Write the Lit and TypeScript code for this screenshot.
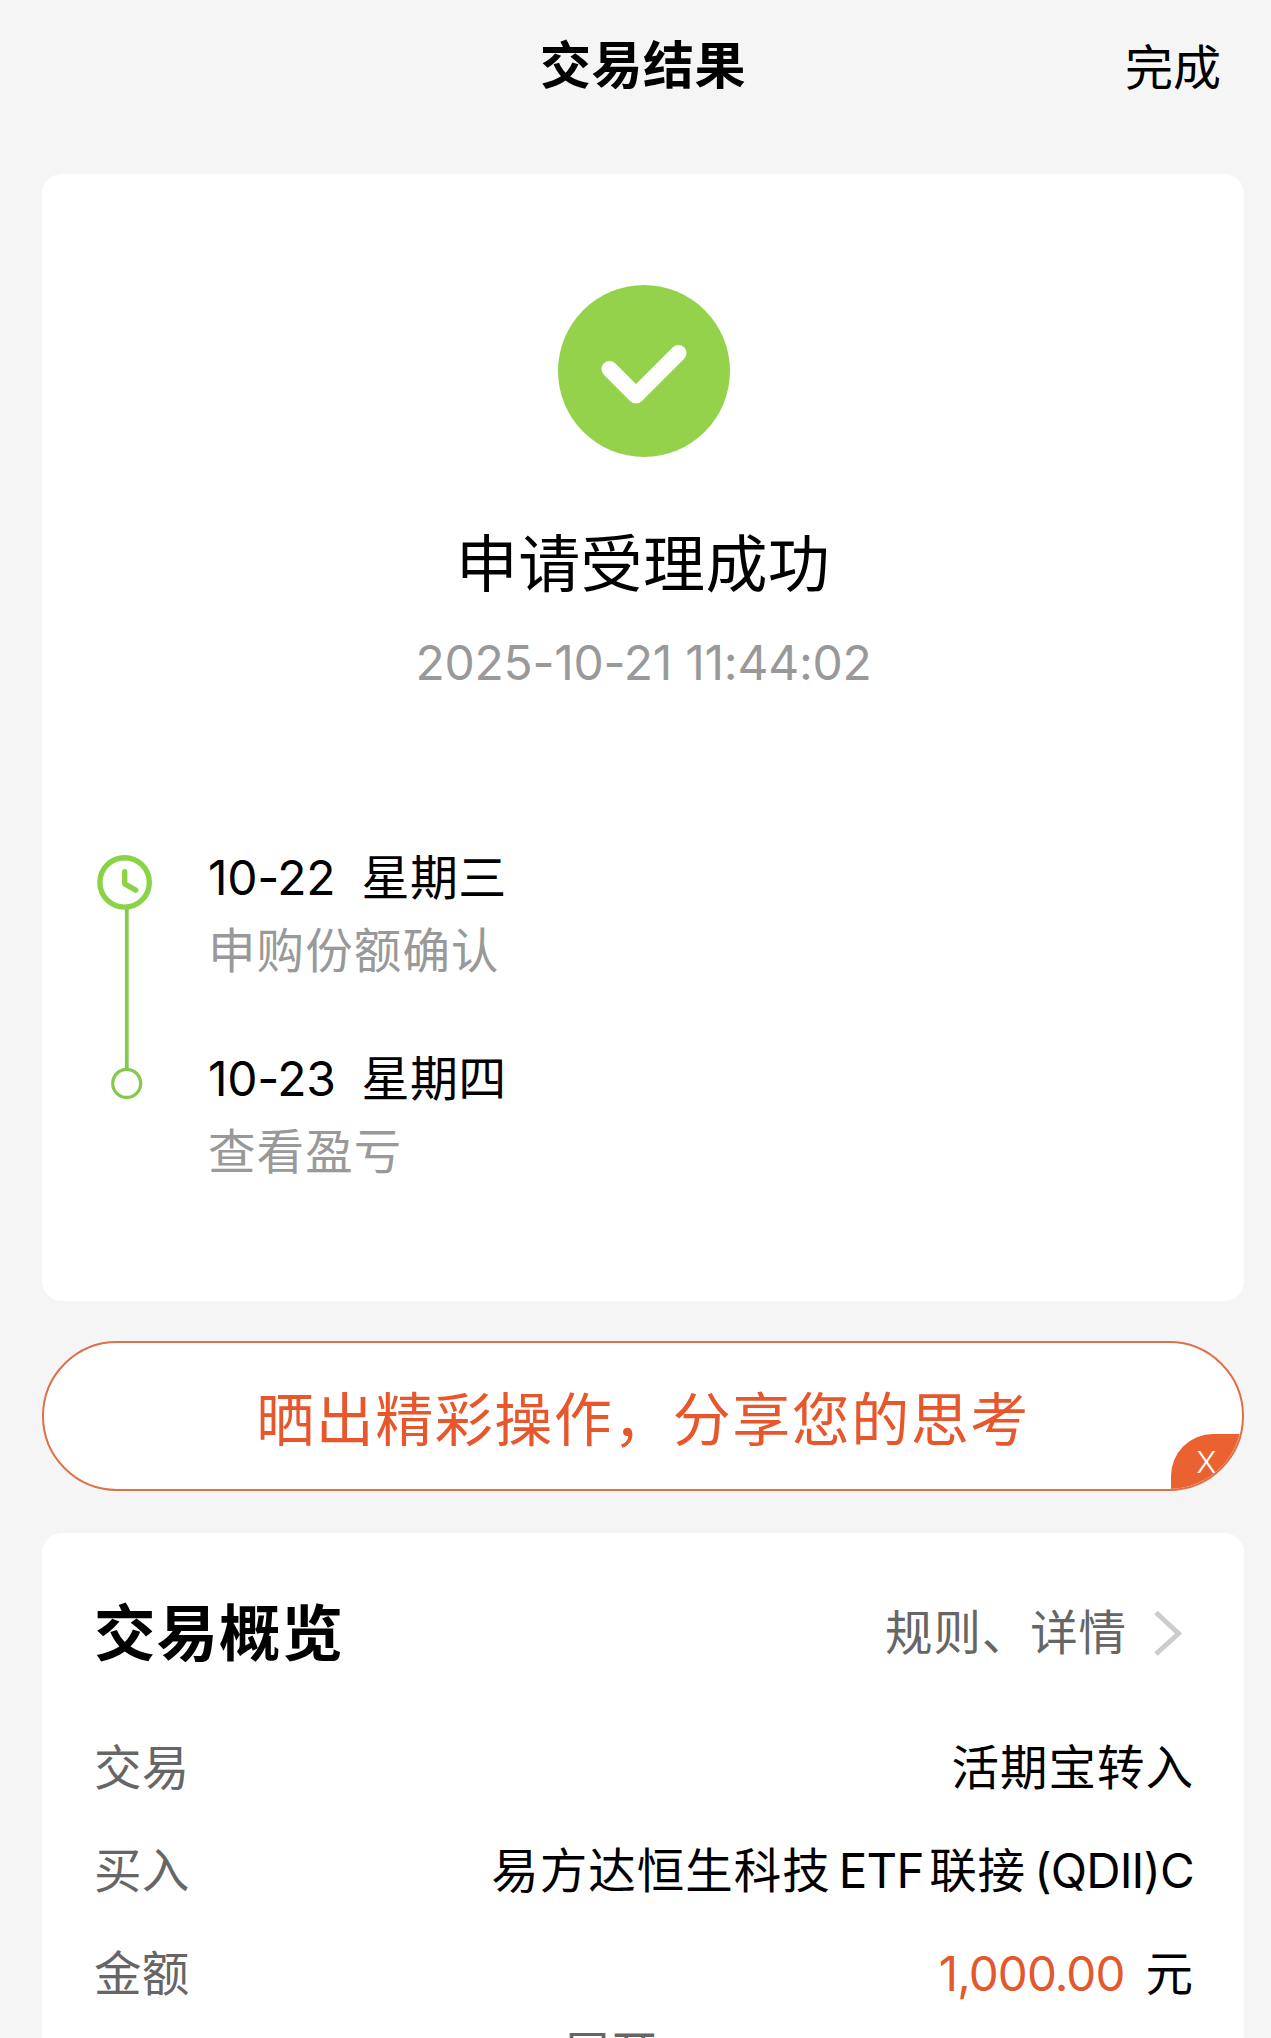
import { LitElement, html, css, nothing } from "lit";
import { customElement, property } from "lit/decorators.js";

const fontStack = css`Inter, "Noto Sans CJK SC", sans-serif`;

interface Step {
  date: string;
  weekday: string;
  note: string;
}

const steps: Step[] = [
  { date: "10-22", weekday: "星期三", note: "申购份额确认" },
  { date: "10-23", weekday: "星期四", note: "查看盈亏" },
];

@customElement("result-timeline")
export class ResultTimeline extends LitElement {
  static styles = css`
    :host {
      display: flex;
      padding-left: 52px;
      font-family: ${fontStack};
    }
    .rail {
      width: 60px;
      height: 246px;
      flex: none;
      margin-right: 54px;
    }
    .steps {
      display: flex;
      flex-direction: column;
      gap: 58px;
      margin-top: -6px;
    }
    .when {
      display: flex;
      gap: 27px;
      height: 60px;
      line-height: 60px;
      font-size: 48px;
      color: #000;
      white-space: nowrap;
    }
    .date {
      width: 126.5px;
      letter-spacing: -0.3px;
    }
    .weekday {
      letter-spacing: 0.4px;
    }
    .note {
      height: 60px;
      margin-top: 13px;
      padding-bottom: 10px;
      line-height: 60px;
      font-size: 47.5px;
      letter-spacing: 1.1px;
      color: #999;
      white-space: nowrap;
    }
  `;

  @property({ attribute: false }) items: Step[] = [];

  render() {
    return html`
      <svg class="rail" viewBox="94 854 60 246">
        <path d="M126.8 908V1069" stroke="#86c94f" stroke-width="3.8" />
        <circle cx="124.6" cy="882.4" r="24.7" fill="#fff" stroke="#8bd346" stroke-width="5.4" />
        <path d="M124.7 871.8v12l11 6.4" fill="none" stroke="#8bd346" stroke-width="5.4" stroke-linecap="round" stroke-linejoin="round" />
        <circle cx="126.7" cy="1083.4" r="14" fill="#fff" stroke="#86c94f" stroke-width="3.2" />
      </svg>
      <div class="steps">
        ${this.items.map(
          (s) => html`<div class="step">
            <div class="when"><span class="date">${s.date}</span><span class="weekday">${s.weekday}</span></div>
            <div class="note">${s.note}</div>
          </div>`
        )}
      </div>
    `;
  }
}

@customElement("detail-row")
export class DetailRow extends LitElement {
  static styles = css`
    :host {
      display: flex;
      justify-content: space-between;
      height: 103px;
      line-height: 103px;
      font-family: ${fontStack};
      font-size: 47.5px;
      letter-spacing: 1px;
      white-space: nowrap;
      color: #000;
    }
    .label {
      margin-left: -1px;
      letter-spacing: 0.2px;
      color: #666;
    }
    .value {
      margin-right: -1px;
    }
    .amount {
      color: #e2592d;
      margin-right: 21px;
      letter-spacing: -0.9px;
    }
    .latin {
      letter-spacing: -0.8px;
      margin: 0 5.5px 0 8px;
    }
    .latin.last {
      margin-right: 0;
    }
  `;

  @property() label = "";
  @property() value = "";
  @property() amount = "";

  private pieces() {
    const parts = this.value.split(/([A-Za-z()]+)/).filter(Boolean);
    return parts.map((p, i) =>
      /^[A-Za-z()]/.test(p)
        ? html`<span class="latin ${i === parts.length - 1 ? "last" : ""}">${p}</span>`
        : p
    );
  }

  render() {
    return html`
      <span class="label">${this.label}</span>
      <span class="value"
        >${this.amount ? html`<span class="amount">${this.amount}</span>` : nothing}${this.pieces()}</span
      >
    `;
  }
}

@customElement("app-root")
export class AppRoot extends LitElement {
  static styles = css`
    :host {
      display: block;
      box-sizing: border-box;
      height: 2038px;
      overflow: hidden;
      padding: 0 27px 0 42px;
      background: #f5f5f5;
      font-family: ${fontStack};
      color: #000;
    }
    .header {
      display: grid;
      grid-template-columns: 1fr auto 1fr;
      height: 174px;
      white-space: nowrap;
    }
    .title {
      grid-column: 2;
      margin: 0;
      height: 60px;
      padding-top: 36px;
      line-height: 60px;
      font-size: 51px;
      font-weight: 600;
      letter-spacing: 0.5px;
    }
    .done {
      justify-self: end;
      padding: 38px 23px 0 0;
      line-height: 60px;
      font-size: 48px;
    }
    .card {
      background: #fff;
      border-radius: 20px;
    }
    .result {
      box-sizing: border-box;
      height: 1127px;
      padding-top: 111px;
    }
    .summary {
      display: flex;
      flex-direction: column;
      align-items: center;
      height: 569px;
      padding-left: 2px;
      white-space: nowrap;
    }
    .badge {
      width: 172px;
      height: 172px;
    }
    .status {
      margin: 68px 2px 0 0;
      line-height: 80px;
      font-size: 62px;
      letter-spacing: 0.4px;
    }
    .time {
      margin: 28px 1px 0 0;
      line-height: 60px;
      font-size: 48px;
      letter-spacing: -0.25px;
      color: #999;
    }
    .banner {
      position: relative;
      box-sizing: border-box;
      height: 150px;
      margin: 40px 0 42px;
      border: 2px solid #dd7047;
      border-radius: 75px;
      background: #fff;
      overflow: hidden;
      text-align: center;
      line-height: 154px;
      font-size: 58px;
      letter-spacing: 1.5px;
      color: #e7572b;
      white-space: nowrap;
    }
    .close {
      position: absolute;
      right: -2px;
      bottom: -2px;
      width: 73px;
      height: 57px;
      border-top-left-radius: 42px;
      background: #e9622f;
      color: #fff;
      font-size: 30px;
      font-weight: 300;
      line-height: 57px;
      letter-spacing: 0;
      text-indent: -2px;
    }
    .overview {
      box-sizing: border-box;
      height: 560px;
      padding: 50px 51px 0 53px;
      border-radius: 20px 20px 0 0;
    }
    .overview-head {
      display: flex;
      align-items: center;
      justify-content: space-between;
      height: 102px;
      margin-bottom: 31px;
      white-space: nowrap;
    }
    .overview-title {
      margin: 0 0 0 -1px;
      font-size: 61.5px;
      font-weight: 600;
      line-height: 102px;
      letter-spacing: 1px;
    }
    .more {
      display: flex;
      align-items: center;
      gap: 26px;
      margin: -2px 10px 0 0;
      font-size: 47.5px;
      letter-spacing: 0.9px;
      line-height: 100px;
      color: #666;
    }
    .chevron {
      width: 30px;
      height: 46px;
    }
    .expand {
      text-align: center;
      margin-top: -1px;
      padding-right: 67px;
      height: 60px;
      line-height: 60px;
      font-size: 47.5px;
      color: #666;
    }
  `;

  render() {
    return html`
      <header class="header">
        <h1 class="title">交易结果</h1>
        <span class="done">完成</span>
      </header>
      <section class="card result">
        <div class="summary">
          <svg class="badge" viewBox="0 0 172 172">
            <circle cx="86" cy="86" r="86" fill="#93d24a" />
            <path d="M51.5 84 78 110.5 120.5 68" fill="none" stroke="#fff" stroke-width="16" stroke-linecap="round" stroke-linejoin="round" />
          </svg>
          <div class="status">申请受理成功</div>
          <div class="time">2025-10-21 11:44:02</div>
        </div>
        <result-timeline .items=${steps}></result-timeline>
      </section>
      <div class="banner">
        晒出精彩操作，分享您的思考
        <span class="close">X</span>
      </div>
      <section class="card overview">
        <div class="overview-head">
          <h2 class="overview-title">交易概览</h2>
          <span class="more">
            规则、详情
            <svg class="chevron" viewBox="0 0 30 46">
              <path d="M3 2.5 25.5 23.5 3 44" fill="none" stroke="#ccc" stroke-width="5" />
            </svg>
          </span>
        </div>
        <detail-row label="交易" value="活期宝转入"></detail-row>
        <detail-row label="买入" value="易方达恒生科技ETF联接(QDII)C"></detail-row>
        <detail-row label="金额" amount="1,000.00" value="元"></detail-row>
        <div class="expand">展开</div>
      </section>
    `;
  }
}
